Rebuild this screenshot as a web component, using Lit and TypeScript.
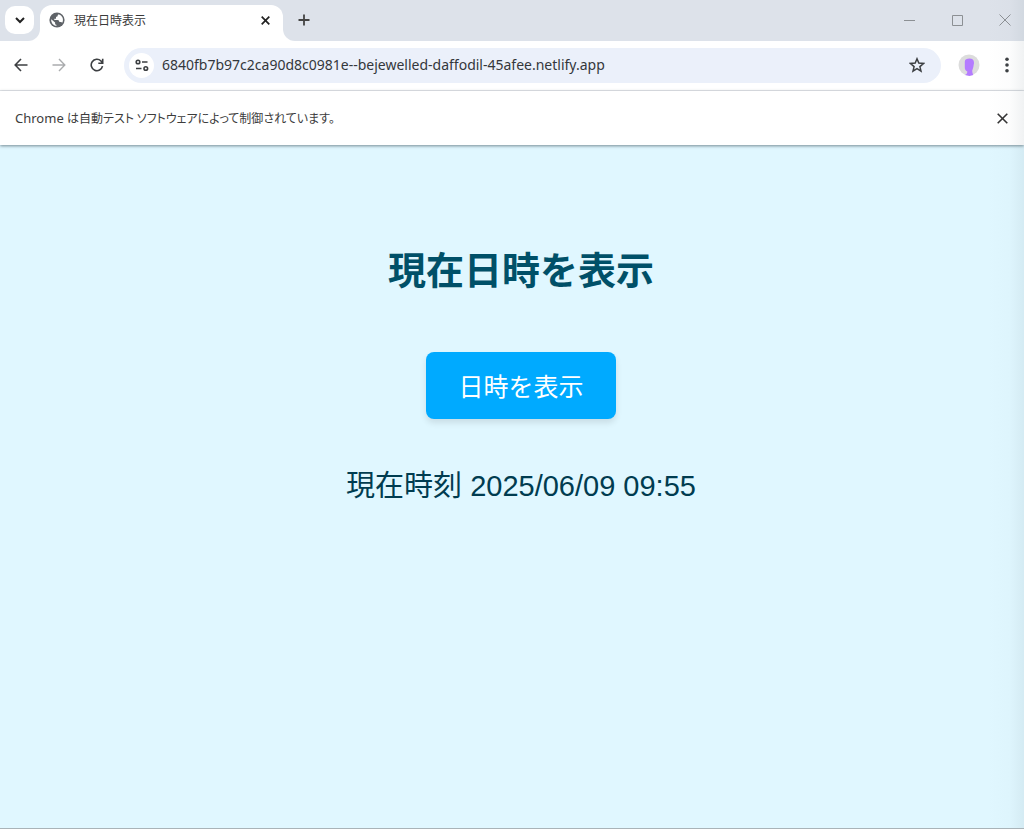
import { LitElement, html, css } from "lit";
import { customElement, state } from "lit/decorators.js";

@customElement("browser-tabs")
class BrowserTabs extends LitElement {
  static styles = css`
    :host { display: flex; height: 41px; background: #dde2ea; color: #222; }
    button { border: 0; padding: 0; background: none; color: inherit; display: grid; place-items: center; }
    svg { display: block; fill: none; stroke: currentColor; }
    .corner { background: #fff; flex: none; width: 40px; }
    .corner-inner { box-sizing: border-box; height: 41px; background: #dde2ea; border-bottom-right-radius: 12px; padding: 6px 5px; }
    .search { width: 29px; height: 28px; border-radius: 10px; background: #fff; }
    .tab { display: flex; align-items: center; box-sizing: border-box; width: 243px; height: 36px; margin-top: 5px; padding: 0 9px 6px 9px; background: #fff; border-radius: 12px 12px 0 0; }
    .title { flex: 1; margin-left: 9px; font: 12px/20px "Noto Sans CJK JP", sans-serif; white-space: nowrap; color: #3a3a3a; }
    .close { width: 18px; height: 20px; }
    .after { flex: 1; background: #fff; }
    .after-inner { box-sizing: border-box; height: 41px; display: flex; align-items: flex-start; padding: 10px 0 0 11px; background: #dde2ea; border-bottom-left-radius: 12px; }
    .new { width: 20px; height: 20px; color: #444; }
    .window { margin-left: auto; display: flex; color: #8c9094; }
    .window button { width: 48px; height: 20px; }
    .window button:last-child { width: 38px; padding-left: 10px; box-sizing: content-box; width: 28px; padding-right: 5px; }
  `;
  render() {
    return html`
      <div class="corner"><div class="corner-inner">
        <button class="search" aria-label="タブを検索"><svg width="10" height="8" viewBox="0 0 10 8" stroke-width="2"><path d="M1 2l4 4 4-4" /></svg></button>
      </div></div>
      <div class="tab">
        <svg width="16" height="16" viewBox="0 0 16 16">
          <circle cx="8" cy="8" r="7.6" fill="#5f6368" stroke="none" />
          <path d="M9.7 2.2C8.800 2.700 8.600 3.300 8.600 4.200L7 5.100v1.600H5.300v1.200h3.300c1.500 0 1.700 1 1.700 2.200h1.600c.6 0 1 .2 1.300.6A5.900 5.900 0 0 0 9.700 2.200zM2.200 7.200L6.100 10.400v1c0 .8.600 1.300 1.300 1.300v1.200A5.900 5.900 0 0 1 2.200 7.200z" fill="#fff" stroke="none" />
        </svg>
        <span class="title">現在日時表示</span>
        <button class="close" aria-label="タブを閉じる"><svg width="9" height="9" viewBox="0 0 9 9" stroke-width="1.700"><path d="M.7.7l7.600 7.600M8.300.7L.7 8.300" /></svg></button>
      </div>
      <div class="after"><div class="after-inner">
        <button class="new" aria-label="新しいタブ"><svg width="12" height="12" viewBox="0 0 12 12" stroke-width="1.800"><path d="M6 .5v11M.5 6h11" /></svg></button>
        <div class="window">
          <button aria-label="最小化"><svg width="11" height="11" viewBox="0 0 11 11"><path d="M0 5.500h11" /></svg></button>
          <button aria-label="最大化"><svg width="11" height="11" viewBox="0 0 11 11"><path d="M.5.5h10v10H.5z" /></svg></button>
          <button aria-label="閉じる"><svg width="12" height="12" viewBox="0 0 12 12"><path d="M.5.5l11 11M11.500.5l-11 11" /></svg></button>
        </div>
      </div></div>`;
  }
}

@customElement("browser-toolbar")
class BrowserToolbar extends LitElement {
  static styles = css`
    :host { display: flex; align-items: center; box-sizing: border-box; height: 50px; padding: 0 5px 1px 9px; border-bottom: 1px solid #e6e8eb; background: #fff; color: #3c3f42; }
    button { border: 0; padding: 0; background: none; color: inherit; display: grid; place-items: center; width: 24px; height: 24px; flex: none; }
    svg { display: block; fill: none; stroke: currentColor; }
    .nav { display: flex; gap: 14px; }
    .off { color: #aaacae; }
    .box { flex: 1; display: flex; align-items: center; box-sizing: border-box; height: 35px; margin-left: 15px; padding: 0 12px 0 5px; border-radius: 18px; background: #ebf0fa; }
    .site { width: 25px; height: 25px; border-radius: 50%; background: #fff; }
    input { flex: 1; min-width: 0; border: 0; padding: 0; margin-left: 8px; background: none; color: #34373b; font: 14px/24px "Noto Sans", sans-serif; outline: 0; }
    .profile { margin-left: 16px; }
    .menu { margin-left: 14px; }
  `;
  render() {
    return html`
      <div class="nav">
        <button aria-label="戻る"><svg width="14" height="14" viewBox="0 0 14 14" stroke-width="1.600"><path d="M13.500 7H1.500M7 1L1.200 7 7 13" /></svg></button>
        <button class="off" aria-label="進む" disabled><svg width="14" height="14" viewBox="0 0 14 14" stroke-width="1.400"><path d="M.5 7h12M7 1l5.800 6L7 13" /></svg></button>
        <button aria-label="再読み込み"><svg width="14" height="14" viewBox="0 0 14 14" stroke-width="1.600"><path d="M12.500 8.200A5.700 5.700 0 1 1 11 3l1.500 1.700M12.700.8v4.400H8.300" /></svg></button>
      </div>
      <div class="box">
        <button class="site" aria-label="サイト情報を表示"><svg width="14" height="14" viewBox="0 0 14 14" stroke-width="1.600"><circle cx="3" cy="4" r="1.800" /><path d="M7 4h5.500M1 10.500h5.500" /><circle cx="10.800" cy="10.500" r="1.800" /></svg></button>
        <input aria-label="アドレスバー" .value=${"6840fb7b97c2ca90d8c0981e--bejewelled-daffodil-45afee.netlify.app"} />
        <button aria-label="ブックマーク"><svg width="16" height="16" viewBox="0 0 16 16" stroke-width="1.500"><path d="M8 1.800l1.800 4.300 4.700.4-3.600 3.100 1.100 4.600L8 11.700l-4 2.500 1.100-4.600L1.500 6.500l4.700-.4z" /></svg></button>
      </div>
      <button class="profile" aria-label="プロフィール"><svg width="22" height="22" viewBox="0 0 22 22"><circle cx="11" cy="11" r="10.500" fill="#dcdcdc" stroke="none" /><path d="M6.800 7.500C7 5.400 8.800 4.600 11.500 4.600c2.800 0 4.500 1.500 4.500 4.100 0 1.300-.4 2.300-.6 4-.2 1.500-.9 2.700-1.200 4 .1 1.700.5 2.900 1 4.400L11.500 22l-4.500-1c1.500-.6 2.300-1.700 2.300-3.600-2-.6-2.500-2.200-2.500-4.200z" fill="#b47bff" stroke="none" /></svg></button>
      <button class="menu" aria-label="メニュー"><svg width="4" height="16" viewBox="0 0 4 16"><g fill="currentColor" stroke="none"><circle cx="2" cy="2.300" r="1.800" /><circle cx="2" cy="8" r="1.800" /><circle cx="2" cy="13.700" r="1.800" /></g></svg></button>`;
  }
}

@customElement("app-root")
class AppRoot extends LitElement {
  static styles = css`
    :host { display: flex; flex-direction: column; position: relative; box-sizing: border-box; min-height: 100vh; border-bottom: 1px solid #a9b3b8; background: #e0f7ff; }
    .info { display: flex; align-items: center; justify-content: space-between; box-sizing: border-box; height: 54px; padding: 0 12px 0 15px; background: #fff; color: #3c3c3c; box-shadow: 0 1px 3px rgba(70, 90, 100, .7); font: 13px/20px "Noto Sans", "Noto Sans CJK JP", sans-serif; }
    .ja { font-family: "Noto Sans CJK JP", sans-serif; font-size: 12px; font-feature-settings: "palt"; }
    .dismiss { border: 0; padding: 0; background: none; color: #333; width: 20px; height: 20px; display: grid; place-items: center; }
    .dismiss svg { display: block; fill: none; stroke: currentColor; }
    main { display: flex; flex-direction: column; align-items: center; padding: 98px 0 48px 18px; font-family: "Liberation Sans", "Noto Sans CJK JP", sans-serif; text-align: center; color: #003c50; }
    h1 { margin: 0 0 53px; font-size: 38px; line-height: 56px; font-weight: 700; color: #005068; }
    .show { border: 0; padding: 17px 32px 14px; border-radius: 8px; background: #00aaff; color: #fff; font-family: inherit; font-size: 25px; line-height: 36px; box-shadow: 0 4px 6px rgba(0, 0, 0, .1); }
    .time { margin: 45px 0 0; font-size: 29px; line-height: 44px; }
    .edge { position: absolute; right: 0; top: 0; bottom: 0; width: 36px; pointer-events: none; background: linear-gradient(to right, transparent, rgba(110, 130, 140, .02) 60%, rgba(110, 130, 140, .1)); }
  `;
  @state() time = "2025/06/09 09:55";
  private refresh() {
    const d = new Date();
    const p = (n: number) => String(n).padStart(2, "0");
    this.time = `${d.getFullYear()}/${p(d.getMonth() + 1)}/${p(d.getDate())} ${p(d.getHours())}:${p(d.getMinutes())}`;
  }
  render() {
    return html`
      <browser-tabs></browser-tabs>
      <browser-toolbar></browser-toolbar>
      <div class="info" lang="ja">
        <span>Chrome <span class="ja">は自動テスト ソフトウェアによって制御されています。</span></span>
        <button class="dismiss" aria-label="閉じる"><svg width="11" height="11" viewBox="0 0 11 11" stroke-width="1.600"><path d="M.7.7l9.600 9.600M10.300.7L.7 10.300" /></svg></button>
      </div>
      <main lang="ja">
        <h1>現在日時を表示</h1>
        <button class="show" @click=${this.refresh}>日時を表示</button>
        <p class="time">現在時刻 ${this.time}</p>
      </main>
      <div class="edge"></div>`;
  }
}
